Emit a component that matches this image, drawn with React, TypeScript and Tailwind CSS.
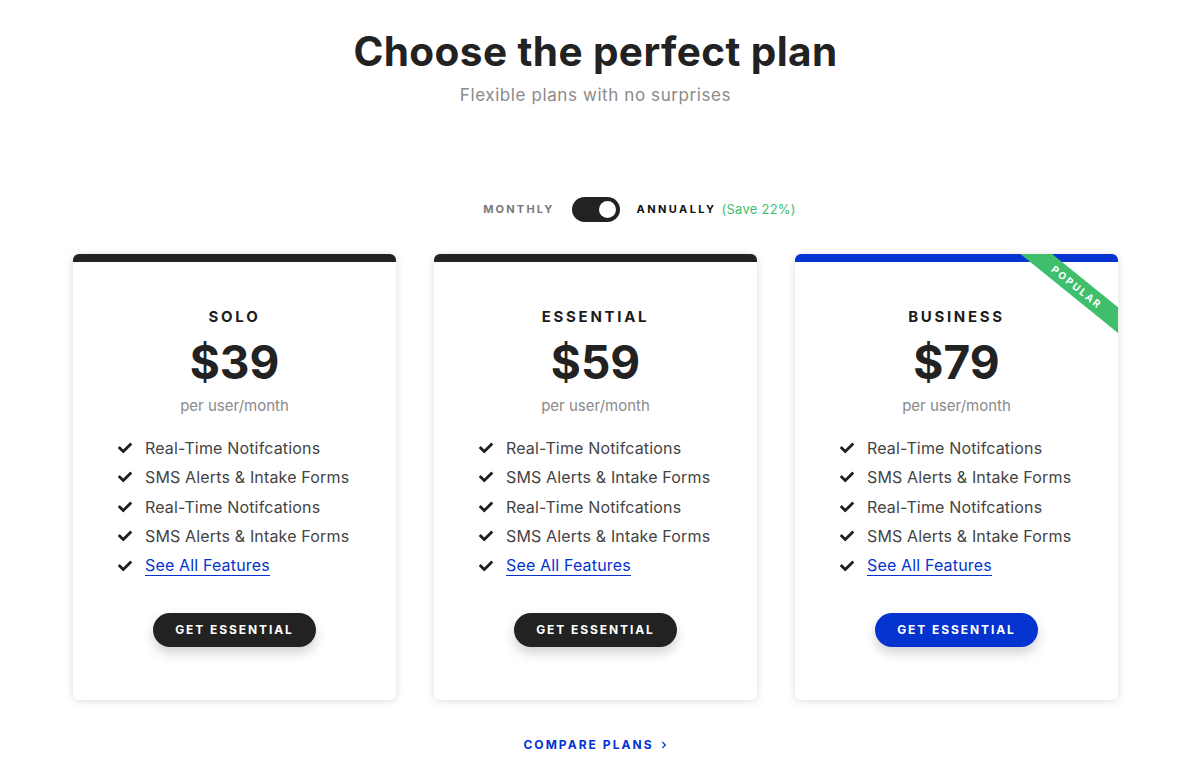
import { FaCheck, FaChevronRight } from "react-icons/fa";

const plans = [
  { name: "SOLO", price: "$39", bar: "bg-[#222222]", btn: "bg-[#222222]", popular: false },
  { name: "ESSENTIAL", price: "$59", bar: "bg-[#222222]", btn: "bg-[#222222]", popular: false },
  { name: "BUSINESS", price: "$79", bar: "bg-[#0433cf]", btn: "bg-[#0433cf]", popular: true },
];

const features = [
  "Real-Time Notifcations",
  "SMS Alerts & Intake Forms",
  "Real-Time Notifcations",
  "SMS Alerts & Intake Forms",
];

function PlanCard({ plan }: { plan: (typeof plans)[number] }) {
  return (
    <div className="relative w-[323px] h-[446px] bg-white rounded-md overflow-hidden shadow-[0_1px_8px_rgba(0,0,0,0.14)] flex flex-col items-center">
      <div className={`h-2 w-full ${plan.bar}`} />
      {plan.popular && (
        <div className="absolute left-[207px] top-[23px] w-[150px] h-[20px] rotate-[39deg] bg-[#3fbf6c] flex items-center justify-center text-white text-[10px] font-bold tracking-[0.2em]">
          POPULAR
        </div>
      )}
      <div className="mt-[45px] text-[15px] leading-5 font-bold tracking-[0.18em] text-[#1c1c1c]">
        {plan.name}
      </div>
      <div className="mt-[9px] text-[46px] leading-[52px] font-bold text-[#222]">{plan.price}</div>
      <div className="mt-2 text-[15px] leading-5 text-[#8a8a8a]">per user/month</div>
      <ul className="mt-[17px] self-start pl-[45px]">
        {features.map((f, i) => (
          <li key={i} className="flex items-center gap-[13px] h-[29.5px] text-[16px] text-[#444] tracking-[0.01em]">
            <FaCheck className="w-[14px] h-[14px] text-[#1f1f1f]" />
            {f}
          </li>
        ))}
        <li className="flex items-center gap-[13px] h-[29.5px] text-[16px] tracking-[0.01em]">
          <FaCheck className="w-[14px] h-[14px] text-[#1f1f1f]" />
          <span className="text-[#0433cf] border-b border-[#0433cf] leading-5">See All Features</span>
        </li>
      </ul>
      <button
        className={`mt-[32px] w-[163px] h-[34px] rounded-full ${plan.btn} text-white text-[12px] font-bold tracking-[0.16em] shadow-[0_6px_12px_rgba(0,0,0,0.18)]`}
      >
        GET ESSENTIAL
      </button>
    </div>
  );
}

export default function App() {
  return (
    <div className="min-h-screen bg-white font-['Inter',sans-serif] flex flex-col items-center pt-[28px] pr-[9px]">
      <h1 className="text-[40.5px] leading-[48px] font-bold text-[#222] tracking-[0.01em]">Choose the perfect plan</h1>
      <p className="mt-[7px] text-[17px] leading-6 text-[#8a8a8a] tracking-[0.035em]">Flexible plans with no surprises</p>

      <div className="mt-[90px] grid grid-cols-[1fr_auto_1fr] items-center h-[25px] w-[500px]">
        <span className="justify-self-end mr-[17px] text-[11px] font-bold tracking-[0.2em] text-[#7a7a7a]">MONTHLY</span>
        <div className="w-[48px] h-[25px] rounded-full bg-[#222] flex items-center justify-end pr-[4px]">
          <div className="w-[17px] h-[17px] rounded-full bg-white" />
        </div>
        <div className="ml-[17px] flex items-center">
          <span className="text-[11px] font-bold tracking-[0.22em] text-[#111]">ANNUALLY</span>
          <span className="ml-[5px] text-[13px] tracking-[0.02em] text-[#3fbf6c]">(Save 22%)</span>
        </div>
      </div>

      <div className="mt-[32px] flex gap-[38px]">
        {plans.map((p) => (
          <PlanCard key={p.name} plan={p} />
        ))}
      </div>

      <a className="mt-[36px] flex items-center gap-[6px] text-[12px] font-bold tracking-[0.17em] text-[#0433cf]">
        COMPARE PLANS
        <FaChevronRight className="w-[8px] h-[8px]" />
      </a>
    </div>
  );
}
